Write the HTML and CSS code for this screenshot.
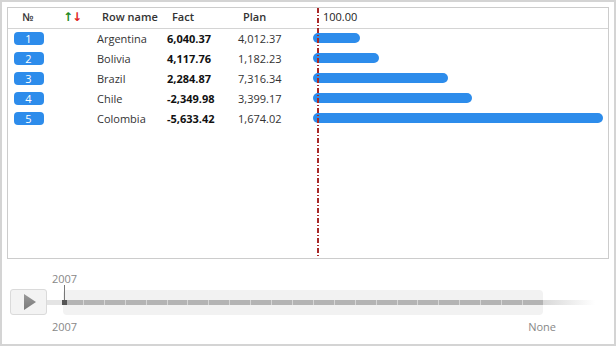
FILE: index.html
```html
<!DOCTYPE html>
<html lang="en">
<head>
    <meta charset="UTF-8">
    <title>Bar Grid</title>
    <link rel="stylesheet" href="styles.css">
</head>
<body>
    <div class="frame">
        <div class="grid-panel">
            <div class="row head">
                <div class="cell num">№</div>
                <div class="cell sort"><span class="up">↑</span><span class="down">↓</span></div>
                <div class="cell name">Row name</div>
                <div class="cell fact">Fact</div>
                <div class="cell plan">Plan</div>
                <div class="cell scale">100.00</div>
            </div>

            <div class="row">
                <div class="cell num"><span class="badge">1</span></div>
                <div class="cell sort"></div>
                <div class="cell name">Argentina</div>
                <div class="cell fact">6,040.37</div>
                <div class="cell plan">4,012.37</div>
                <div class="cell bars"><span class="bar" style="width: 47px"></span></div>
            </div>
            <div class="row">
                <div class="cell num"><span class="badge">2</span></div>
                <div class="cell sort"></div>
                <div class="cell name">Bolivia</div>
                <div class="cell fact">4,117.76</div>
                <div class="cell plan">1,182.23</div>
                <div class="cell bars"><span class="bar" style="width: 66px"></span></div>
            </div>
            <div class="row">
                <div class="cell num"><span class="badge">3</span></div>
                <div class="cell sort"></div>
                <div class="cell name">Brazil</div>
                <div class="cell fact">2,284.87</div>
                <div class="cell plan">7,316.34</div>
                <div class="cell bars"><span class="bar" style="width: 135px"></span></div>
            </div>
            <div class="row">
                <div class="cell num"><span class="badge">4</span></div>
                <div class="cell sort"></div>
                <div class="cell name">Chile</div>
                <div class="cell fact">-2,349.98</div>
                <div class="cell plan">3,399.17</div>
                <div class="cell bars"><span class="bar" style="width: 159px"></span></div>
            </div>
            <div class="row">
                <div class="cell num"><span class="badge">5</span></div>
                <div class="cell sort"></div>
                <div class="cell name">Colombia</div>
                <div class="cell fact">-5,633.42</div>
                <div class="cell plan">1,674.02</div>
                <div class="cell bars"><span class="bar" style="width: 290px"></span></div>
            </div>

            <div class="marker"></div>
        </div>

        <div class="timeline">
            <div class="labels top-labels">
                <span>2007</span>
            </div>
            <div class="controls">
                <button class="play" type="button">
                    <svg width="14" height="16" viewBox="0 0 14 16">
                        <defs>
                            <linearGradient id="tri" x1="0" y1="0" x2="0" y2="1">
                                <stop offset="0" stop-color="#9a9a9a"/>
                                <stop offset="1" stop-color="#7a7a7a"/>
                            </linearGradient>
                        </defs>
                        <path d="M1 0 L13 8 L1 16 Z" fill="url(#tri)"/>
                    </svg>
                </button>
                <div class="track-wrap">
                    <div class="lead"></div>
                    <div class="track-panel">
                        <div class="track">
                            <span></span><span></span><span></span><span></span><span></span><span></span>
                            <span></span><span></span><span></span><span></span><span></span><span></span>
                            <span></span><span></span><span></span><span></span><span></span><span></span>
                            <span></span><span></span><span></span><span></span><span></span>
                        </div>
                        <div class="handle"></div>
                    </div>
                    <div class="tail"></div>
                </div>
            </div>
            <div class="labels bottom-labels">
                <span>2007</span>
                <span>None</span>
            </div>
        </div>
    </div>
</body>
</html>
```

FILE: styles.css
```css
body {
    margin: 0;
    font-family: "Open Sans", "DejaVu Sans", sans-serif;
    font-size: 11px;
    color: #333;
    background: white;
}
.frame {
    width: 616px;
    height: 346px;
    box-sizing: border-box;
    border: 2px solid #d4d4d4;
    padding: 5px 5px 0 5px;
}
.grid-panel {
    position: relative;
    height: 252px;
    box-sizing: border-box;
    border: 1px solid #cccccc;
}
.row {
    display: grid;
    grid-template-columns: 40px 49px 70px 71px 75px 1fr;
    height: 20px;
    box-sizing: border-box;
    padding-bottom: 2px;
    align-items: center;
}
.row.head {
    height: 21px;
    padding-bottom: 3px;
    border-bottom: 1px solid #d4d4d4;
    font-weight: 600;
    color: #333;
}
.cell {
    white-space: nowrap;
}
.num {
    display: flex;
    justify-content: center;
}
.sort {
    display: flex;
    justify-content: center;
    font-family: "DejaVu Sans", sans-serif;
    font-weight: 700;
    font-size: 12px;
    line-height: 14px;
}
.up { color: #1e8a1e; }
.down {
    color: #e02020;
    margin-left: -1px;
}
.head .name { padding-left: 5px; }
.head .fact { padding-left: 5px; }
.head .plan { padding-left: 5px; }
.head .scale {
    padding-left: 10px;
    font-weight: 400;
    color: #222;
}
.row .fact {
    font-weight: 700;
    color: #111;
}
.head .fact { color: #333; font-weight: 600; }
.badge {
    display: inline-block;
    width: 30px;
    height: 13px;
    line-height: 13px;
    border-radius: 4px;
    background: #2d8ceb;
    color: white;
    text-align: center;
    margin-left: 1px;
}
.bars {
    display: flex;
    align-items: center;
}
.bar {
    display: block;
    height: 10px;
    border-radius: 5px;
    background: #2d8ceb;
}
.marker {
    position: absolute;
    left: 309px;
    top: 0;
    bottom: 0;
    width: 2px;
    background: repeating-linear-gradient(to bottom,
        #a82828 0 5px, transparent 5px 7px,
        #a82828 7px 8px, transparent 8px 10px);
}
.timeline {
    color: #888;
    font-size: 11px;
}
.labels {
    display: flex;
    padding-left: 45px;
}
.top-labels {
    height: 18px;
    padding-top: 11px;
    padding-bottom: 1px;
    line-height: 18px;
}
.bottom-labels {
    width: 504px;
    justify-content: space-between;
    padding-top: 3px;
    line-height: 18px;
}
.controls {
    display: flex;
    align-items: center;
    height: 26px;
}
.play {
    width: 37px;
    height: 26px;
    margin-left: 3px;
    padding: 0 0 0 2px;
    border: 1px solid #dadada;
    border-radius: 3px;
    background: #f3f3f3;
    display: flex;
    align-items: center;
    justify-content: center;
}
.track-wrap {
    display: flex;
    align-items: center;
    height: 26px;
}
.lead {
    width: 16px;
    height: 5px;
    background: #e4e4e4;
}
.track-panel {
    position: relative;
    width: 480px;
    height: 25px;
    background: #f2f2f2;
    border-radius: 4px;
}
.track {
    display: flex;
    margin-top: 10px;
    height: 5px;
}
.track span {
    flex: 1;
    background: #b4b4b4;
    border-left: 1px solid #d6d6d6;
}
.track span:first-child {
    border-left: none;
}
.handle {
    position: absolute;
    left: -1px;
    top: 10px;
    width: 5px;
    height: 5px;
    background: #555;
}
.handle::before {
    content: "";
    position: absolute;
    left: 2px;
    top: -15px;
    width: 1px;
    height: 15px;
    background: #777;
}
.tail {
    width: 52px;
    height: 5px;
    background: linear-gradient(to right, #d8d8d8, rgba(255,255,255,0));
}
```
